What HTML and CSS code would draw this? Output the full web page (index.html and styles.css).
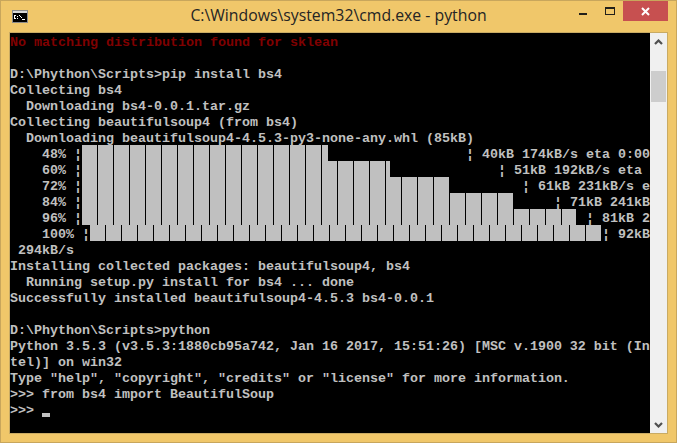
FILE: index.html
```html
<!DOCTYPE html>
<html lang="en">
<head>
<meta charset="utf-8">
<title>cmd.exe - python</title>
<link rel="stylesheet" href="styles.css">
</head>
<body>
<div class="window">
  <header class="titlebar">
    <div class="title-left">
      <svg class="app-icon" width="16" height="13" viewBox="0 0 16 13" shape-rendering="crispEdges">
        <rect width="16" height="13" fill="#8c8c8c"/>
        <rect x="1" y="1" width="14" height="2" fill="#d8d8d8"/>
        <rect x="1" y="3" width="14" height="9" fill="#000"/>
        <path d="M2 5h2v1H2zM2 6h1v2H2zM2 8h2v1H2zM5 6h1v1H5zM5 8h1v1H5zM7 5h1v1H7zM8 6h1v1H8zM9 7h1v1H9zM10 9h3v1h-3z" fill="#fff"/>
      </svg>
    </div>
    <div class="title">C:\Windows\system32\cmd.exe - python</div>
    <div class="controls">
      <span class="min"></span>
      <span class="max"></span>
      <span class="close">
        <svg width="9" height="9" viewBox="0 0 9 9"><path d="M1 1l7 7M8 1l-7 7" stroke="#fff" stroke-width="2" fill="none"/></svg>
      </span>
    </div>
  </header>
  <div class="client">
    <main class="console">
      <div class="line err">No matching distribution found for sklean</div>
      <div class="line"> </div>
      <div class="line">D:\Phython\Scripts&gt;pip install bs4</div>
      <div class="line">Collecting bs4</div>
      <div class="line">  Downloading bs4-0.0.1.tar.gz</div>
      <div class="line">Collecting beautifulsoup4 (from bs4)</div>
      <div class="line">  Downloading beautifulsoup4-4.5.3-py3-none-any.whl (85kB)</div>
      <div class="line progress"><span>    48% ¦</span><i class="bar b1"></i><span class="tail t1">¦ 40kB 174kB/s eta 0:00</span></div>
      <div class="line progress"><span>    60% ¦</span><i class="bar b2"></i><span class="tail t2">¦ 51kB 192kB/s eta</span></div>
      <div class="line progress"><span>    72% ¦</span><i class="bar b3"></i><span class="tail t3">¦ 61kB 231kB/s e</span></div>
      <div class="line progress"><span>    84% ¦</span><i class="bar b4"></i><span class="tail t4">¦ 71kB 241kB</span></div>
      <div class="line progress"><span>    96% ¦</span><i class="bar b5"></i><span class="tail t5">¦ 81kB 2</span></div>
      <div class="line progress"><span>    100% ¦</span><i class="bar b6"></i><span class="tail t6">¦ 92kB</span></div>
      <div class="line"> 294kB/s</div>
      <div class="line">Installing collected packages: beautifulsoup4, bs4</div>
      <div class="line">  Running setup.py install for bs4 ... done</div>
      <div class="line">Successfully installed beautifulsoup4-4.5.3 bs4-0.0.1</div>
      <div class="line"> </div>
      <div class="line">D:\Phython\Scripts&gt;python</div>
      <div class="line">Python 3.5.3 (v3.5.3:1880cb95a742, Jan 16 2017, 15:51:26) [MSC v.1900 32 bit (In</div>
      <div class="line">tel)] on win32</div>
      <div class="line">Type "help", "copyright", "credits" or "license" for more information.</div>
      <div class="line">&gt;&gt;&gt; from bs4 import BeautifulSoup</div>
      <div class="line prompt"><span>&gt;&gt;&gt; </span><i class="cursor"></i></div>
      <div class="line"> </div>
    </main>
    <aside class="scrollbar">
      <svg class="arrow" width="9" height="6" viewBox="0 0 9 6"><path d="M1 5l3.5-3.5L8 5" stroke="#505050" stroke-width="2.2" fill="none"/></svg>
      <div class="thumb"></div>
      <svg class="arrow arrow-down" width="9" height="6" viewBox="0 0 9 6"><path d="M1 1l3.5 3.5L8 1" stroke="#505050" stroke-width="2.2" fill="none"/></svg>
    </aside>
  </div>
</div>
</body>
</html>
```
FILE: styles.css
```css
* { box-sizing: border-box; }
html, body { margin: 0; height: 100%; background: #f0c76a; }
.window {
  width: 677px;
  height: 443px;
  background: #f0c76a;
  border: 1px solid #c8a65c;
  display: flex;
  flex-direction: column;
}
.titlebar {
  height: 31px;
  display: grid;
  grid-template-columns: 1fr auto 1fr;
  align-items: start;
  flex: none;
}
.title-left { padding: 9px 0 0 11px; display: flex; }
.title {
  font: 15.8px/1 "Open Sans", "Noto Sans", sans-serif;
  color: #242424;
  padding-top: 7px;
  white-space: nowrap;
}
.controls { display: flex; justify-content: flex-end; padding-right: 8px; align-items: flex-start; }
.min { width: 8px; height: 2px; background: #22201a; margin: 12px 0 0 0; }
.max { width: 10px; height: 8px; border: 1px solid #22201a; border-top-width: 2px; margin: 6px 8px 0 18px; }
.close {
  width: 45px; height: 20px; background: #c75050;
  display: flex; align-items: center; justify-content: center;
}
.close svg { display: block; }
.client {
  display: flex;
  margin-left: 8px;
  width: 659px;
  height: 402px;
  border: 1px solid #c9ab64;
}
.console {
  width: 640px;
  height: 400px;
  background: #000;
  color: #c0c0c0;
  font: bold 13.33px/20px "Liberation Mono", monospace;
  overflow: hidden;
}
.line { height: 16px; width: 640px; white-space: pre; }
.err { color: #800000; }
.progress { display: flex; }
.prompt { display: flex; }
.bar {
  display: block;
  height: 16px;
  flex: none;
  background: repeating-linear-gradient(90deg, #c0c0c0 0 15px, #000 15px 16px);
}
.b1 { width: 246px; }
.b2 { width: 308px; }
.b3 { width: 367px; }
.b4 { width: 431px; }
.b5 { width: 494px; }
.b6 { width: 511px; }
.t1 { margin-left: 138px; }
.t2 { margin-left: 108px; }
.t3 { margin-left: 73px; }
.t4 { margin-left: 41px; }
.t5 { margin-left: 10px; }
.t6 { margin-left: 1px; }
.cursor { display: block; width: 8px; height: 4px; background: #c0c0c0; margin-top: 12px; }
.scrollbar {
  width: 17px;
  height: 400px;
  background: #f0f0f0;
  display: flex;
  flex-direction: column;
  align-items: center;
  padding-top: 6px;
}
.arrow { display: block; flex: none; }
.arrow-down { margin-top: auto; margin-bottom: 5px; }
.thumb { width: 15px; height: 31px; background: #cdcdcd; margin-top: 26px; }
```
